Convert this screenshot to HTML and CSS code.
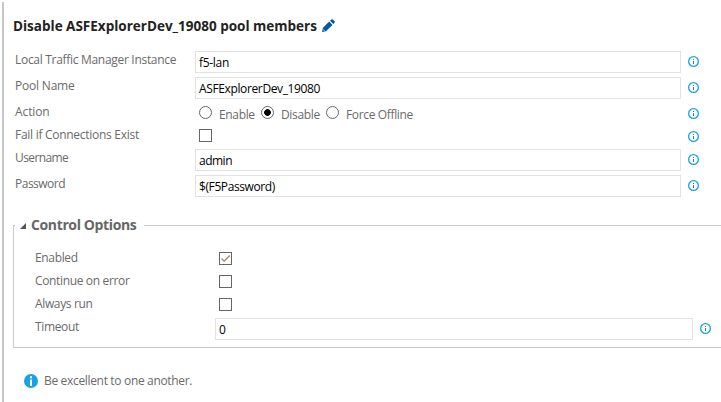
FILE: index.html
```html
<!DOCTYPE html>
<html lang="en">
<head>
<meta charset="utf-8">
<title>Task settings</title>
<link rel="stylesheet" href="styles.css">
</head>
<body>
<svg class="defs" aria-hidden="true">
  <symbol id="info" viewBox="0 0 11 11"><circle cx="5.5" cy="5.5" r="4.85" fill="none" stroke="#1ba1e2" stroke-width="1.3"/><path d="M5 3h1v1H5zM5 5h1v3H5z" fill="#1583bd"/></symbol>
</svg>
<main class="panel">
  <h1 class="title"><span>Disable ASFExplorerDev_19080 pool members</span>
    <svg class="pencil" viewBox="0 0 13 13"><path d="M0 13l.8-4L7.2 2.6l3.3 3.3L4 12.2zM8 1.8L9.3.5Q10 0 10.7.5l1.8 1.8q.7.7 0 1.4l-1.2 1.4z" fill="#0058a8"/><path d="M1 10.3l1.7 1.7" stroke="#fff" stroke-width=".8"/></svg>
  </h1>
  <div class="row"><label class="t1">Local Traffic Manager Instance</label><div class="input v1">f5-lan</div><svg class="info"><use href="#info"/></svg></div>
  <div class="row"><label class="t2">Pool Name</label><div class="input v2">ASFExplorerDev_19080</div><svg class="info"><use href="#info"/></svg></div>
  <div class="row short"><label class="t3">Action</label>
    <div class="choices"><i class="radio"></i><span class="c1">Enable</span><i class="radio on"></i><span class="c2">Disable</span><i class="radio"></i><span class="c3">Force Offline</span></div>
    <svg class="info"><use href="#info"/></svg></div>
  <div class="row short"><label class="t4">Fail if Connections Exist</label><div class="choices"><i class="check"></i></div><svg class="info"><use href="#info"/></svg></div>
  <div class="row"><label class="t5">Username</label><div class="input v3">admin</div><svg class="info"><use href="#info"/></svg></div>
  <div class="row"><label class="t6">Password</label><div class="input v4">$(F5Password)</div><svg class="info"><use href="#info"/></svg></div>

  <section class="group">
    <h2 class="legend"><svg class="arrow" viewBox="0 0 6 6"><path d="M6 0v6H0z" fill="#555"/></svg><span>Control Options</span></h2>
    <div class="row short"><label class="t7">Enabled</label><div class="choices"><i class="check"><svg viewBox="0 0 11 11"><path d="M1.5 5.5l2.7 2.7L9.7 2.5" fill="none" stroke="#927f62" stroke-width="1.1"/></svg></i></div></div>
    <div class="row short"><label class="t8">Continue on error</label><div class="choices"><i class="check"></i></div></div>
    <div class="row short"><label class="t9">Always run</label><div class="choices"><i class="check"></i></div></div>
    <div class="row"><label class="t10">Timeout</label><div class="input">0</div><svg class="info"><use href="#info"/></svg></div>
  </section>

  <div class="note"><svg viewBox="0 0 14 14"><circle cx="7" cy="7" r="7" fill="#1ba1e2"/><path d="M6 2.3h2v2H6zM6 5.5h2V12H6z" fill="#fff"/></svg><span>Be excellent to one another.</span></div>
</main>
</body>
</html>
```
FILE: styles.css
```css
* { box-sizing: border-box; }
body {
  margin: 0;
  background: #fff;
  color: #6a6a6a;
  font: 12px/16px "Open Sans", "Noto Sans", sans-serif;
  overflow: hidden;
}
.defs { display: block; width: 0; height: 0; }
.panel {
  width: 740px;
  height: 400px;
  margin-top: 2px;
  margin-left: 2px;
  border-left: 2px solid #c8c8c8;
  padding: 14px 0 0 9px;
  white-space: nowrap;
}
.title {
  display: flex;
  height: 35px;
  margin: 0;
  color: #222;
  font-size: 13.5px;
  font-weight: 700;
  line-height: 20px;
}
.title span { width: 309px; }
.pencil { width: 13px; height: 13px; margin-top: 3px; }
.row { display: flex; height: 26px; padding-left: 2px; }
.row.short { height: 23px; }
.row label { width: 180px; flex: none; padding-top: 1px; letter-spacing: -.35px; }
.input {
  width: 486px;
  height: 22px;
  flex: none;
  border: 1px solid #e2e2e2;
  padding: 3px 0 0 3px;
  color: #000;
}
.info { width: 11px; height: 11px; margin: 5px 0 0 7px; flex: none; }
.choices { display: flex; width: 486px; padding: 3px 0 0 4px; }
.radio, .check {
  width: 13px;
  height: 13px;
  flex: none;
  border: 1px solid #666;
}
.radio { border-radius: 50%; }
.radio.on { background: radial-gradient(circle, #000 3px, #fff 3.7px); }
.check svg { display: block; width: 11px; height: 11px; }
.choices span { padding: 1px 0 0 7px; flex: none; letter-spacing: -.35px; }
.c1 { width: 49px; }
.c2 { width: 52px; }
.row .t1 { letter-spacing: -.3px; }
.row .t2 { letter-spacing: -.2px; }
.row .t3 { letter-spacing: -.1px; }
.row .t4 { letter-spacing: -.28px; }
.row .t5 { letter-spacing: -.6px; }
.row .t6 { letter-spacing: -.5px; }
.v1 { letter-spacing: -.3px; }
.v2 { letter-spacing: -.37px; }
.v3 { letter-spacing: -.5px; }
.v4 { letter-spacing: -.4px; }
.group {
  height: 123px;
  width: 740px;
  margin: 24px 0 0;
  border: 1px solid #c8c8c8;
  padding-left: 19px;
}
.legend {
  display: flex;
  width: 129px;
  height: 20px;
  margin: -11px 0 14px -18px;
  padding-left: 5px;
  background: #fff;
  color: #666;
  font-size: 14px;
  line-height: 20px;
  letter-spacing: -.37px;
}
.arrow { width: 6px; height: 6px; margin: 8px 5px 0 0; }
.group .input { width: 478px; }
.note { display: flex; margin: 26px 0 0 11px; letter-spacing: -.33px; }
.note svg { width: 14px; height: 14px; margin-right: 6px; }
.note span { margin-top: -1px; }
```
